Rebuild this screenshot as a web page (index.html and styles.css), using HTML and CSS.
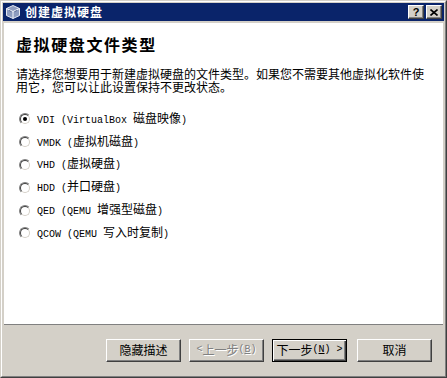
FILE: index.html
```html
<!DOCTYPE html>
<html>
<head>
<meta charset="utf-8">
<title>创建虚拟硬盘</title>
<link rel="stylesheet" href="styles.css">
</head>
<body>
<div class="window">
  <div class="frame">
    <div class="titlebar">
      <svg class="appicon" viewBox="0 0 16 16" width="16" height="16">
        <path d="M8 1.5 L14.5 4.5 L14.5 11.5 L8 14.5 L1.5 11.5 L1.5 4.5 Z" fill="#8e9cbf" stroke="#e6e9f2" stroke-width="1"/>
        <path d="M1.5 4.5 L8 7.5 L14.5 4.5 M8 7.5 V14.5" fill="none" stroke="#f4f6fa" stroke-width="1"/>
        <path d="M4 6.5 L6.5 7.7 M9.5 7.7 L12 6.5" stroke="#5d6c95" stroke-width="1"/>
      </svg>
      <span class="title">创建虚拟硬盘</span>
      <div class="caps">
        <span class="capbtn help">?</span>
        <span class="capbtn close">
          <svg viewBox="0 0 8 7" width="8" height="7"><path d="M0.5 0.5 L7.5 6.5 M7.5 0.5 L0.5 6.5" stroke="#000" stroke-width="1.6"/></svg>
        </span>
      </div>
    </div>
    <div class="page">
      <h1 class="heading">虚拟硬盘文件类型</h1>
      <p class="desc">请选择您想要用于新建虚拟硬盘的文件类型。如果您不需要其他虚拟化软件使用它，您可以让此设置保持不更改状态。</p>
      <div class="options">
        <div class="opt"><span class="radio checked"></span><span class="lbl"><span class="lat">VDI (VirtualBox </span>磁盘映像<span class="lat">)</span></span></div>
        <div class="opt"><span class="radio"></span><span class="lbl"><span class="lat">VMDK (</span>虚拟机磁盘<span class="lat">)</span></span></div>
        <div class="opt"><span class="radio"></span><span class="lbl"><span class="lat">VHD (</span>虚拟硬盘<span class="lat">)</span></span></div>
        <div class="opt"><span class="radio"></span><span class="lbl"><span class="lat">HDD (</span>并口硬盘<span class="lat">)</span></span></div>
        <div class="opt"><span class="radio"></span><span class="lbl"><span class="lat">QED (QEMU </span>增强型磁盘<span class="lat">)</span></span></div>
        <div class="opt"><span class="radio"></span><span class="lbl"><span class="lat">QCOW (QEMU </span>写入时复制<span class="lat">)</span></span></div>
      </div>
    </div>
    <div class="buttons">
      <span class="btn">隐藏描述</span>
      <span class="btn disabled"><span class="lat">&lt; </span>上一步<span class="lat"> (<u>B</u>)</span></span>
      <span class="btn default">下一步<span class="lat"> (<u>N</u>) &gt;</span></span>
      <span class="btn cancel">取消</span>
    </div>
  </div>
</div>
</body>
</html>
```

FILE: styles.css
```css
html, body {
  margin: 0;
  padding: 0;
}
body {
  background: #D4D0C8;
  font-family: "Noto Sans CJK SC", "Liberation Sans", sans-serif;
  font-size: 12px;
  color: #000;
}
.window {
  width: 447px;
  height: 378px;
  box-sizing: border-box;
  border: 1px solid;
  border-color: #D4D0C8 #404040 #404040 #D4D0C8;
}
.frame {
  height: 100%;
  box-sizing: border-box;
  border: 1px solid;
  border-color: #fff #808080 #808080 #fff;
  padding: 1px;
  display: flex;
  flex-direction: column;
}
.titlebar {
  flex: none;
  height: 18px;
  background: #0A246A;
  display: flex;
  align-items: center;
  padding: 0 2px 0 2px;
}
.appicon {
  flex: none;
  display: block;
}
.title {
  color: #fff;
  font-weight: bold;
  font-size: 12px;
  letter-spacing: 1px;
  line-height: 18px;
  margin-left: 4px;
}
.caps {
  margin-left: auto;
  display: flex;
  gap: 2px;
}
.capbtn {
  width: 16px;
  height: 14px;
  box-sizing: border-box;
  background: #D4D0C8;
  border: 1px solid;
  border-color: #fff #404040 #404040 #fff;
  box-shadow: inset -1px -1px #808080;
  display: flex;
  align-items: center;
  justify-content: center;
  font: bold 11px/12px "Liberation Sans", sans-serif;
  color: #000;
}
.capbtn svg {
  display: block;
}
.page {
  flex: 1;
  background: #fff;
  margin: 2px 1px 0 1px;
  border-bottom: 1px solid #808080;
  padding: 11px 12px 0 12px;
}
.heading {
  margin: 0;
  font-size: 16px;
  font-weight: bold;
  letter-spacing: 1.6px;
  line-height: 20px;
}
.desc {
  margin: 13px 0 0 0;
  line-height: 13px;
}
.options {
  margin-top: 15px;
  display: flex;
  flex-direction: column;
}
.opt {
  height: 22.8px;
  display: flex;
  align-items: center;
  gap: 6px;
  padding-left: 3px;
}
.radio {
  position: relative;
  flex: none;
  width: 12px;
  height: 12px;
  box-sizing: border-box;
  border-radius: 50%;
  border: 1px solid;
  border-color: #808080 #fff #fff #808080;
}
.radio::before {
  content: "";
  position: absolute;
  inset: 0;
  border-radius: 50%;
  border: 1px solid;
  border-color: #404040 #D4D0C8 #D4D0C8 #404040;
  background: #fff;
}
.radio.checked::after {
  content: "";
  position: absolute;
  left: 3px;
  top: 3px;
  width: 4px;
  height: 4px;
  border-radius: 50%;
  background: #000;
}
.lbl {
  line-height: 14px;
  white-space: nowrap;
}
.lat {
  font-family: "Liberation Mono", monospace;
  font-size: 10px;
}
.buttons {
  flex: none;
  height: 50px;
  display: flex;
  align-items: center;
  justify-content: flex-end;
  gap: 8px;
  padding-right: 12px;
}
.btn {
  width: 75px;
  height: 23px;
  box-sizing: border-box;
  background: #D4D0C8;
  border: 1px solid;
  border-color: #fff #404040 #404040 #fff;
  box-shadow: inset -1px -1px #808080;
  display: flex;
  align-items: center;
  justify-content: center;
  font-size: 12px;
  line-height: 14px;
  white-space: nowrap;
}
.btn.disabled {
  color: #808080;
  text-shadow: 1px 1px 0 #fff;
}
.btn.default {
  border-color: #000;
  box-shadow: inset 1px 1px #fff, inset -1px -1px #404040, inset -2px -2px #808080;
}
.btn.cancel {
  margin-left: 2px;
}
```
